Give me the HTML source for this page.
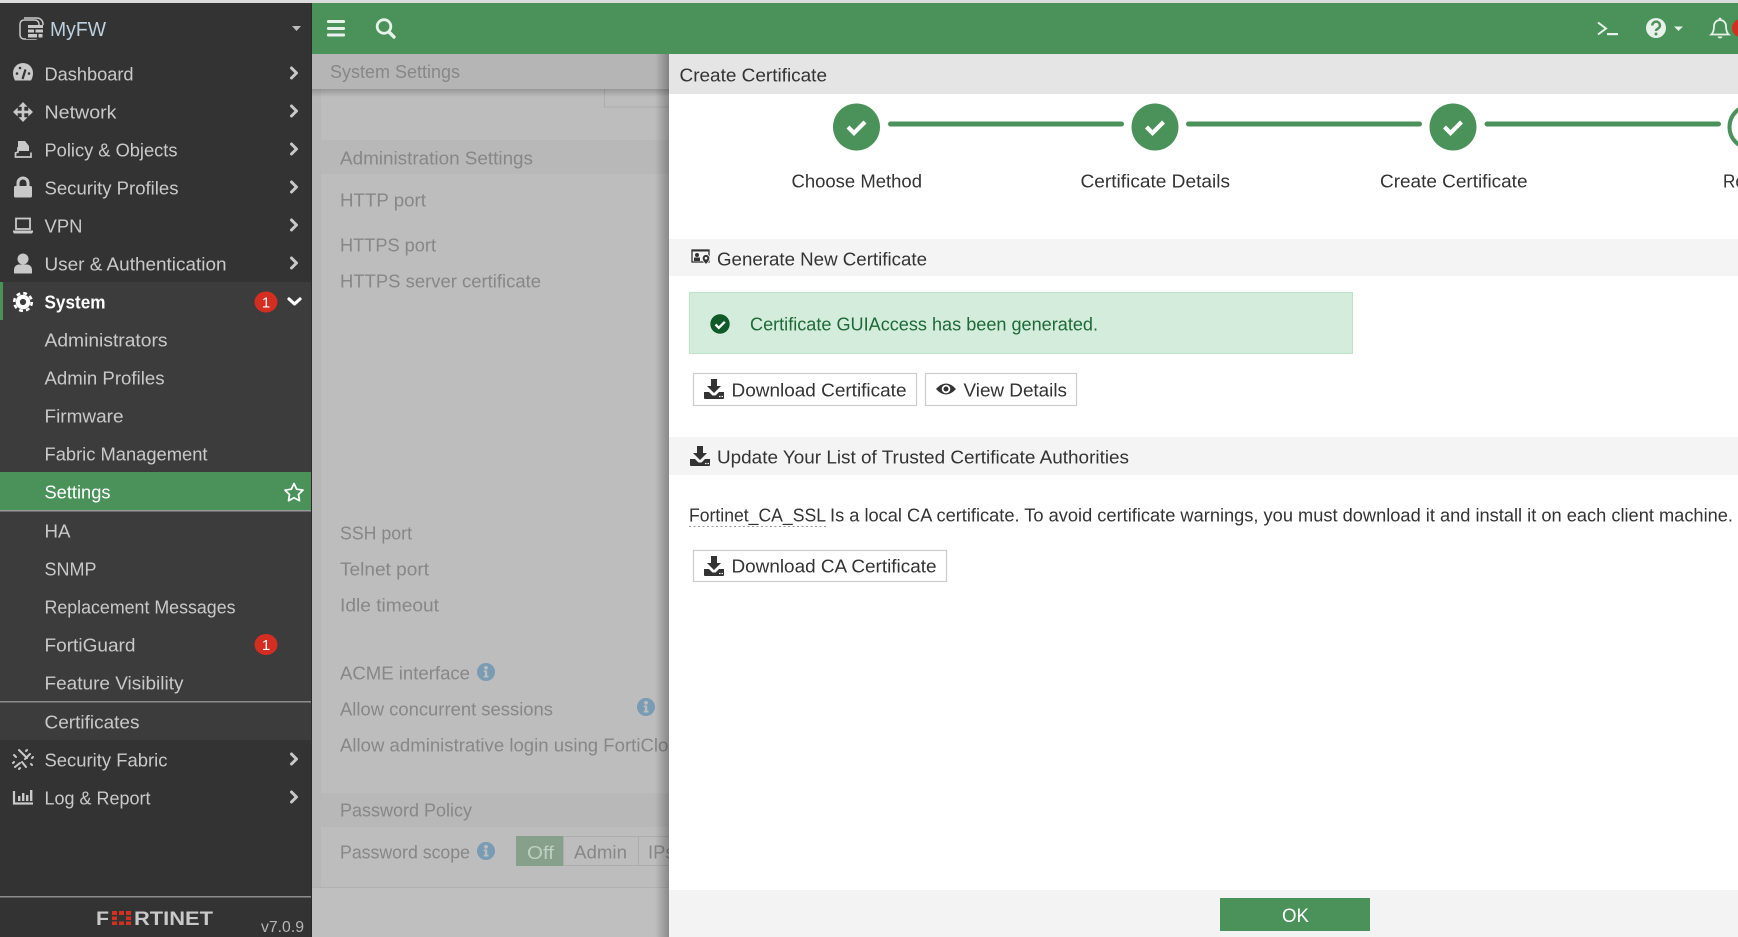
<!DOCTYPE html>
<html lang="en"><head><meta charset="utf-8"><title>Create Certificate</title>
<style>
html,body{margin:0;padding:0;background:#fff;width:1738px;height:937px;overflow:hidden}
svg{display:block}
text{font-family:"Liberation Sans",sans-serif;font-size:18.6px;white-space:pre}
.s{fill:#c9c9c9}.o{fill:#878787}.d{fill:#333}
.ch{fill:none;stroke:#c9c9c9;stroke-width:3;stroke-linecap:round;stroke-linejoin:round}
.ic{fill:#c9c9c9}
.inf{fill:#7a9bb4}
</style></head><body>
<svg width="1738" height="937" viewBox="0 0 1738 937" xmlns="http://www.w3.org/2000/svg">
<defs>
<linearGradient id="gl" x1="0" x2="1" y1="0" y2="0"><stop offset="0" stop-color="#000" stop-opacity="0"/><stop offset="1" stop-color="#000" stop-opacity=".28"/></linearGradient>
<linearGradient id="gt" x1="0" x2="0" y1="0" y2="1"><stop offset="0" stop-color="#000" stop-opacity=".2"/><stop offset="1" stop-color="#000" stop-opacity="0"/></linearGradient>
<symbol id="dl" viewBox="0 0 20 20" overflow="visible"><path d="M7 0h6v7h4l-7 7-7-7h4z" fill="#333"/><path d="M0 13h5l3.500 3.500h3L15 13h5v6a1 1 0 0 1-1 1H1a1 1 0 0 1-1-1z" fill="#333"/><path d="M15 17.500h1.500M17.500 17.500H19" stroke="#fff" stroke-width="1.200"/></symbol>
<symbol id="inf" viewBox="0 0 18 18"><circle cx="9" cy="9" r="9" class="inf"/><circle cx="9" cy="4.800" r="1.900" fill="#bdbdbd"/><path d="M6.700 7.500h3.500v5.300h1.300v1.700H6.700v-1.700h1.300V9.200H6.700z" fill="#bdbdbd"/></symbol>
</defs>

<!-- top strip -->
<rect width="1738" height="3" fill="#dcdcdc"/>

<!-- main overlay area -->
<rect x="312" y="54" width="360" height="883" fill="#bdbdbd"/>
<rect x="312" y="54" width="9" height="834" fill="#b7b7b7"/>
<rect x="321" y="140" width="350" height="34" fill="#b8b8b8"/>
<rect x="321" y="793" width="350" height="34" fill="#b8b8b8"/>
<rect x="604.500" y="88" width="70" height="19" fill="none" stroke="#adadad"/>
<rect x="312" y="89" width="360" height="8" fill="url(#gt)"/>
<rect x="312" y="54" width="360" height="35" fill="#b5b5b5"/>
<rect x="312" y="888" width="360" height="49" fill="#bfbfbf"/>
<rect x="312" y="887" width="360" height="1" fill="#b2b2b2"/>

<g transform="translate(0,-0.500)">
<text x="330" y="78.500" class="o" textLength="130" lengthAdjust="spacingAndGlyphs">System Settings</text>
<text x="340" y="165" class="o" textLength="193" lengthAdjust="spacingAndGlyphs">Administration Settings</text>
<text x="340" y="207" class="o" textLength="86" lengthAdjust="spacingAndGlyphs">HTTP port</text>
<text x="340" y="252" class="o" textLength="96" lengthAdjust="spacingAndGlyphs">HTTPS port</text>
<text x="340" y="288" class="o" textLength="201" lengthAdjust="spacingAndGlyphs">HTTPS server certificate</text>
<text x="340" y="540" class="o" textLength="72" lengthAdjust="spacingAndGlyphs">SSH port</text>
<text x="340" y="576" class="o" textLength="89" lengthAdjust="spacingAndGlyphs">Telnet port</text>
<text x="340" y="612" class="o" textLength="99" lengthAdjust="spacingAndGlyphs">Idle timeout</text>
<text x="340" y="680" class="o" textLength="130" lengthAdjust="spacingAndGlyphs">ACME interface</text>
<text x="340" y="716" class="o" textLength="213" lengthAdjust="spacingAndGlyphs">Allow concurrent sessions</text>
<text x="340" y="752" class="o" textLength="349" lengthAdjust="spacingAndGlyphs">Allow administrative login using FortiCloud</text>
<text x="340" y="817" class="o" textLength="132" lengthAdjust="spacingAndGlyphs">Password Policy</text>
<text x="340" y="859" class="o" textLength="130" lengthAdjust="spacingAndGlyphs">Password scope</text>
</g>
<use href="#inf" x="477" y="663" width="18" height="18"/>
<use href="#inf" x="637" y="698" width="18" height="18"/>
<use href="#inf" x="477" y="842" width="18" height="18"/>
<rect x="516" y="836" width="47" height="30" fill="#87a08b"/>
<text x="527" y="859" fill="#bdd0c0" textLength="27" lengthAdjust="spacingAndGlyphs">Off</text>
<rect x="563.500" y="836.500" width="75" height="29" fill="none" stroke="#adadad"/>
<text x="574" y="858.500" class="o" textLength="53" lengthAdjust="spacingAndGlyphs">Admin</text>
<rect x="638.500" y="836.500" width="60" height="29" fill="none" stroke="#adadad"/>
<text x="648" y="858.500" class="o" textLength="46" lengthAdjust="spacingAndGlyphs">IPsec</text>

<!-- header -->
<rect x="312" y="3" width="1426" height="51" fill="#4a925a"/>
<g fill="#e8f1ea"><rect x="327" y="20" width="18" height="3" rx="1"/><rect x="327" y="27" width="18" height="3" rx="1"/><rect x="327" y="33.500" width="18" height="3" rx="1"/></g>
<circle cx="384" cy="26.500" r="6.800" fill="none" stroke="#e8f1ea" stroke-width="2.800"/>
<path d="M389 32l5 5" stroke="#e8f1ea" stroke-width="3.400" stroke-linecap="round"/>
<path d="M1598 22.500l8 6-8 6" fill="none" stroke="#e8f1ea" stroke-width="2"/>
<rect x="1607" y="33" width="11" height="2.200" fill="#e8f1ea"/>
<circle cx="1656" cy="28" r="10" fill="#e8f1ea"/>
<path d="M1652.300 25.500a3.800 3.700 0 1 1 5.500 3.200c-1.300.7-1.800 1.100-1.800 2.300" fill="none" stroke="#4a925a" stroke-width="2.500"/>
<circle cx="1656" cy="34" r="1.500" fill="#4a925a"/>
<path d="M1674 26.500h9l-4.500 4.500z" fill="#e8f1ea"/>
<path d="M1720 20a6 6 0 0 0-6 6c0 5-1 7-2.700 8.500h17.400C1727 33 1726 31 1726 26a6 6 0 0 0-6-6z" fill="none" stroke="#e8f1ea" stroke-width="1.800"/>
<circle cx="1720" cy="19" r="1.400" fill="#e8f1ea"/><path d="M1717.500 36.500a2.600 2.600 0 0 0 5 0z" fill="#e8f1ea"/>
<circle cx="1741" cy="28" r="9" fill="#d3301f"/>

<!-- sidebar -->
<rect x="0" y="3" width="312" height="934" fill="#333"/>
<rect x="0" y="282" width="311" height="458" fill="#3c3c3c"/>
<rect x="0" y="282" width="3" height="38" fill="#4a925a"/>
<rect x="311" y="3" width="1" height="934" fill="#2b2b2b"/>
<rect x="0" y="472" width="311" height="38" fill="#4a925a"/>
<rect x="0" y="510" width="311" height="1.500" fill="#9a9a9a"/>
<rect x="0" y="701" width="311" height="1.500" fill="#8c8c8c"/>
<rect x="0" y="896" width="311" height="1.500" fill="#8c8c8c"/>

<!-- MyFW -->
<g fill="none" stroke="#c9c9c9" stroke-width="1.500"><rect x="20" y="20" width="19" height="19" rx="4"/><path d="M24 18h13a6 6 0 0 1 6 6v1" /></g>
<rect x="26" y="25" width="17" height="14" fill="#333"/>
<g fill="#c9c9c9"><rect x="28" y="25" width="15" height="3"/><rect x="28" y="29.500" width="6" height="3"/><rect x="35.500" y="29.500" width="7.500" height="3"/><rect x="28" y="34" width="9" height="3.500"/><rect x="38.500" y="34" width="4" height="3.500"/></g>
<text x="50" y="36" fill="#bcd0e0" textLength="56" lengthAdjust="spacingAndGlyphs" style="font-size:20px">MyFW</text>
<path d="M292 26h9l-4.500 5z" fill="#bcbcbc"/>

<!-- sidebar icons -->
<path class="ic" d="M13 73a10 10 0 0 1 20 0c0 3-.8 5.300-2 7.500H15c-1.200-2.200-2-4.500-2-7.500z"/>
<path d="M22.500 79l3-9.500" stroke="#333" stroke-width="2.200"/>
<g fill="#333"><circle cx="17" cy="73.500" r="1.300"/><circle cx="20" cy="68" r="1.300"/><circle cx="29" cy="73.500" r="1.300"/></g>

<g class="ic"><rect x="21.700" y="105" width="2.600" height="14"/><rect x="16" y="110.700" width="14" height="2.600"/><path d="M23 102l4.500 4.700h-9zM23 122l-4.500-4.700h9zM13 112l4.700-4.500v9zM33 112l-4.700 4.500v-9z"/></g>

<path class="ic" d="M18 141h7l4 5v5H18z"/>
<path d="M18 147v5l-2.500 1v4h15.500v-4.500" fill="none" stroke="#c9c9c9" stroke-width="1.700"/>

<rect class="ic" x="14" y="186" width="18" height="11.500" rx="1.500"/>
<path d="M18 186v-3a5 5 0 0 1 10 0v3" fill="none" stroke="#c9c9c9" stroke-width="3"/>

<rect x="16" y="218.500" width="14" height="10.500" fill="none" stroke="#c9c9c9" stroke-width="1.800"/>
<path class="ic" d="M13 230.500h20v1.500l-1 1.500H14l-1-1.500z"/>

<circle class="ic" cx="23" cy="259" r="5.500"/>
<path class="ic" d="M14 273v-3.500a5 5 0 0 1 5-5h8a5 5 0 0 1 5 5v3.500a.5.500 0 0 1-.5.500h-17a.5.500 0 0 1-.5-.500z"/>

<circle cx="23" cy="302" r="8.800" fill="none" stroke="#fff" stroke-width="2.600" stroke-dasharray="3.800 3.110"/>
<circle cx="23" cy="302" r="5.200" fill="none" stroke="#fff" stroke-width="4.200"/>

<g stroke="#c9c9c9" stroke-width="2" stroke-linecap="round"><path d="M19 750l8 8M22 762l4 5M30 754l-5 5M20 763l-5 4M16 757l-2-2M31 764l1 1M26 751l1-1M14 762l-1 1M33 757l-1 1M20 768l-1 1"/></g>

<path d="M14 791v12.500h19" fill="none" stroke="#c9c9c9" stroke-width="2.200"/>
<g class="ic"><rect x="18" y="796" width="2.400" height="5"/><rect x="22" y="793" width="2.400" height="8"/><rect x="26" y="795" width="2.400" height="6"/><rect x="30" y="790" width="2.400" height="11"/></g>

<!-- sidebar labels -->
<g transform="translate(-0.500,-0.500)">
<text x="45" y="81" class="s" textLength="89" lengthAdjust="spacingAndGlyphs">Dashboard</text>
<text x="45" y="119" class="s" textLength="72" lengthAdjust="spacingAndGlyphs">Network</text>
<text x="45" y="157" class="s" textLength="133" lengthAdjust="spacingAndGlyphs">Policy &amp; Objects</text>
<text x="45" y="195" class="s" textLength="134" lengthAdjust="spacingAndGlyphs">Security Profiles</text>
<text x="45" y="233" class="s" textLength="38" lengthAdjust="spacingAndGlyphs">VPN</text>
<text x="45" y="271" class="s" textLength="182" lengthAdjust="spacingAndGlyphs">User &amp; Authentication</text>
<text x="45" y="309" fill="#fff" font-weight="bold" textLength="61" lengthAdjust="spacingAndGlyphs">System</text>
<text x="45" y="347" class="s" textLength="123" lengthAdjust="spacingAndGlyphs">Administrators</text>
<text x="45" y="385" class="s" textLength="120" lengthAdjust="spacingAndGlyphs">Admin Profiles</text>
<text x="45" y="423" class="s" textLength="79" lengthAdjust="spacingAndGlyphs">Firmware</text>
<text x="45" y="461" class="s" textLength="163" lengthAdjust="spacingAndGlyphs">Fabric Management</text>
<text x="45" y="499" fill="#fff" textLength="66" lengthAdjust="spacingAndGlyphs">Settings</text>
<text x="45" y="538" class="s" textLength="26" lengthAdjust="spacingAndGlyphs">HA</text>
<text x="45" y="576" class="s" textLength="52" lengthAdjust="spacingAndGlyphs">SNMP</text>
<text x="45" y="614" class="s" textLength="191" lengthAdjust="spacingAndGlyphs">Replacement Messages</text>
<text x="45" y="652" class="s" textLength="91" lengthAdjust="spacingAndGlyphs">FortiGuard</text>
<text x="45" y="690" class="s" textLength="139" lengthAdjust="spacingAndGlyphs">Feature Visibility</text>
<text x="45" y="729" class="s" textLength="95" lengthAdjust="spacingAndGlyphs">Certificates</text>
<text x="45" y="767" class="s" textLength="123" lengthAdjust="spacingAndGlyphs">Security Fabric</text>
<text x="45" y="805" class="s" textLength="106" lengthAdjust="spacingAndGlyphs">Log &amp; Report</text>
</g>

<!-- chevrons -->
<path class="ch" d="M291.500 68l5 5-5 5M291.500 106l5 5-5 5M291.500 144l5 5-5 5M291.500 182l5 5-5 5M291.500 220l5 5-5 5M291.500 258l5 5-5 5M291.500 754l5 5-5 5M291.500 792l5 5-5 5"/>
<path d="M289 299l5.500 5 5.500-5" fill="none" stroke="#fff" stroke-width="3.200" stroke-linecap="round" stroke-linejoin="round"/>

<!-- badges -->
<ellipse cx="266" cy="302" rx="11.500" ry="10.500" fill="#d42e23"/>
<text x="266" y="307.500" fill="#fff" text-anchor="middle" style="font-size:15px">1</text>
<ellipse cx="266" cy="644.500" rx="11.500" ry="10.500" fill="#d42e23"/>
<text x="266" y="650" fill="#fff" text-anchor="middle" style="font-size:15px">1</text>

<path d="M294 483.500l2.700 5.700 6.300.9-4.500 4.400 1 6.200-5.500-3-5.500 3 1-6.200-4.500-4.400 6.300-.9z" fill="none" stroke="#fff" stroke-width="1.700" stroke-linejoin="round"/>

<!-- fortinet logo -->
<text x="96" y="925" fill="#c9c9c9" font-weight="bold" textLength="13" lengthAdjust="spacingAndGlyphs" style="font-size:19px">F</text>
<g fill="#d3301f"><rect x="112" y="911" width="5" height="4"/><rect x="119" y="911" width="5" height="4"/><rect x="126" y="911" width="5" height="4"/><rect x="112" y="916.500" width="5" height="3.500"/><rect x="126" y="916.500" width="5" height="3.500"/><rect x="112" y="921.500" width="5" height="3.500"/><rect x="119" y="921.500" width="5" height="3.500"/><rect x="126" y="921.500" width="5" height="3.500"/></g>
<text x="134" y="925" fill="#c9c9c9" font-weight="bold" textLength="79" lengthAdjust="spacingAndGlyphs" style="font-size:19px">RTINET</text>
<text x="261" y="932" fill="#b5b5b5" textLength="43" lengthAdjust="spacingAndGlyphs" style="font-size:16px">v7.0.9</text>

<!-- drawer -->
<rect x="655" y="54" width="14" height="883" fill="url(#gl)"/>
<rect x="669" y="54" width="1069" height="883" fill="#fff"/>
<rect x="669" y="54" width="1069" height="40" fill="#e5e5e5"/>
<text x="679.500" y="81.500" class="d" textLength="147.500" lengthAdjust="spacingAndGlyphs">Create Certificate</text>

<g fill="#4a925a">
<circle cx="856.500" cy="127" r="23.500"/><circle cx="1155" cy="127" r="23.500"/><circle cx="1453" cy="127" r="23.500"/>
<rect x="888" y="121.500" width="236" height="5" rx="2.500"/><rect x="1186" y="121.500" width="236" height="5" rx="2.500"/><rect x="1484.500" y="121.500" width="236.500" height="5" rx="2.500"/>
</g>
<circle cx="1751" cy="127" r="21.500" fill="#fff" stroke="#4a925a" stroke-width="4"/>
<g fill="none" stroke="#fff" stroke-width="4.200"><path d="M848 127l6 6 11-11"/><path d="M1146.500 127l6 6 11-11"/><path d="M1444.500 127l6 6 11-11"/></g>

<text x="791.500" y="187.500" class="d" textLength="130.500" lengthAdjust="spacingAndGlyphs">Choose Method</text>
<text x="1080.500" y="187.500" class="d" textLength="149.500" lengthAdjust="spacingAndGlyphs">Certificate Details</text>
<text x="1380" y="187.500" class="d" textLength="147.500" lengthAdjust="spacingAndGlyphs">Create Certificate</text>
<text x="1723" y="187.500" class="d" textLength="56" lengthAdjust="spacingAndGlyphs">Review</text>

<rect x="669" y="239" width="1069" height="37" fill="#f4f4f4"/>
<rect x="692" y="250" width="17" height="12" fill="none" stroke="#333" stroke-width="1.300"/>
<rect x="692" y="249.500" width="17" height="2" fill="#333"/>
<circle cx="697" cy="255" r="2" fill="#333"/><rect x="694" y="257.500" width="6" height="3.500" fill="#333"/>
<path d="M706 254.500a3.700 3.700 0 0 1 3.700 3.700c0 2.500-3.700 6.300-3.700 6.300s-3.700-3.800-3.700-6.300a3.700 3.700 0 0 1 3.700-3.700z" fill="#333" stroke="#f4f4f4" stroke-width=".8"/>
<circle cx="706" cy="258.200" r="1.300" fill="#f4f4f4"/>
<text x="717" y="265.500" class="d" textLength="210" lengthAdjust="spacingAndGlyphs">Generate New Certificate</text>

<rect x="689.500" y="292.500" width="663" height="61" fill="#d4ecdc" stroke="#bde3c9"/>
<circle cx="720" cy="324" r="9.700" fill="#0f5a28"/>
<path d="M715.500 324.500l3.300 3.300 6-6" fill="none" stroke="#fff" stroke-width="2.400"/>
<text x="750" y="330.500" fill="#1e6a37" textLength="348" lengthAdjust="spacingAndGlyphs">Certificate GUIAccess has been generated.</text>

<rect x="693.500" y="373.500" width="223" height="32" fill="#fff" stroke="#ccc" stroke-width="1.200"/>
<use href="#dl" x="704" y="379" width="20" height="20"/>
<text x="731.500" y="396.500" class="d" textLength="175" lengthAdjust="spacingAndGlyphs">Download Certificate</text>
<rect x="925.500" y="373.500" width="151" height="32" fill="#fff" stroke="#ccc" stroke-width="1.200"/>
<path d="M936 389q10-11 20 0q-10 11-20 0z" fill="#333"/>
<circle cx="946" cy="389" r="4.300" fill="#fff"/><circle cx="946" cy="389" r="2.500" fill="#333"/>
<text x="963.500" y="396.500" class="d" textLength="103.500" lengthAdjust="spacingAndGlyphs">View Details</text>

<rect x="669" y="437" width="1069" height="38" fill="#f4f4f4"/>
<use href="#dl" x="690" y="446" width="20" height="20"/>
<text x="717" y="463.500" class="d" textLength="412" lengthAdjust="spacingAndGlyphs">Update Your List of Trusted Certificate Authorities</text>

<text x="689" y="521.500" class="d" textLength="137" lengthAdjust="spacingAndGlyphs">Fortinet_CA_SSL</text>
<path d="M689 526.500h137" stroke="#999" stroke-width="1" stroke-dasharray="2 2.500"/>
<text x="830" y="521.500" class="d" textLength="903" lengthAdjust="spacingAndGlyphs">Is a local CA certificate. To avoid certificate warnings, you must download it and install it on each client machine.</text>

<rect x="693.500" y="550.500" width="253" height="31" fill="#fff" stroke="#ccc" stroke-width="1.200"/>
<use href="#dl" x="704" y="556" width="20" height="20"/>
<text x="731.500" y="572.500" class="d" textLength="205" lengthAdjust="spacingAndGlyphs">Download CA Certificate</text>

<rect x="669" y="890" width="1069" height="47" fill="#f3f3f3"/>
<rect x="1220" y="898" width="150" height="33" fill="#4a925a"/>
<text x="1282" y="922" fill="#fff" textLength="27" lengthAdjust="spacingAndGlyphs" style="font-size:19px">OK</text>
</svg>
</body></html>
